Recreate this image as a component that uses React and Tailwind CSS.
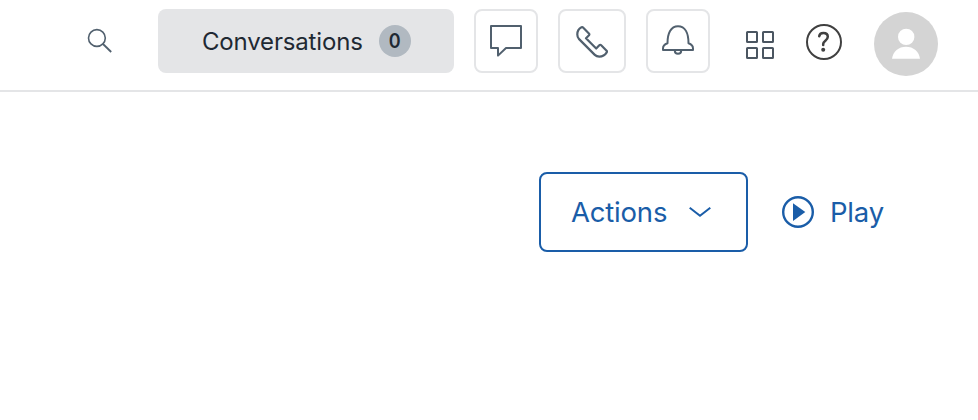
const iconProps = { fill: "none", stroke: "currentColor", strokeWidth: 2, strokeLinejoin: "round", strokeLinecap: "round", "aria-hidden": true };

function SearchIcon() {
  return (
    <svg width="26" height="26" viewBox="0 0 26 26" {...iconProps} strokeWidth="1.6" strokeLinecap="butt">
      <circle cx="9.9" cy="10" r="8.4" />
      <path d="M16 16l8.2 8" strokeWidth="1.8" />
    </svg>
  );
}

function ChatIcon() {
  return (
    <svg width="32" height="32" viewBox="0 0 32 32" {...iconProps}>
      <path d="M1 1h30v22H16l-8 7.6V23H1z" />
    </svg>
  );
}

function PhoneIcon() {
  return (
    <svg width="32" height="32" viewBox="0 0 32 32" {...iconProps} strokeWidth="2.2">
      <path d="M1.300 8.500C1.300 5.200 3 2.500 5.500 1.300c.7-.3 1.300-.1 1.800.4l5.600 5.700c.6.600.6 1.200.1 1.900L10 12.300l10.200 10.200 3.100-3.300c.6-.6 1.300-.6 1.900 0l5.400 5.500c.5.500.5 1.100.1 1.700-1.700 2.800-4.300 4.300-7.400 4.300-1.800 0-3.300-.6-4.500-1.800L3.100 13.100C1.900 11.900 1.300 10.300 1.300 8.500z" />
    </svg>
  );
}

function BellIcon() {
  return (
    <svg width="32" height="32" viewBox="0 0 32 32" {...iconProps}>
      <path d="M5.500 18.300C5.500 8.500 8.800 1.200 16 1.200s10.500 7.300 10.500 17.100c2.800 1 4.500 2.800 4.500 5.100v1.700H1v-1.700c0-2.300 1.700-4.100 4.500-5.100z" />
      <path d="M12.800 25.500c0 1.900 1.400 3.300 3.200 3.300s3.200-1.400 3.200-3.300" strokeLinecap="butt" />
    </svg>
  );
}

function HelpIcon() {
  return (
    <svg width="36" height="36" viewBox="0 0 36 36" {...iconProps}>
      <circle cx="18" cy="18" r="17" />
      <path d="M13.200 12.200c.3-2.100 2-3.200 4.200-3.200 2.600 0 4.400 1.500 4.400 3.800 0 3.900-4.600 3.900-4.600 7.300v.8" strokeWidth="2.500" />
      <circle cx="17.200" cy="25.700" r="2" fill="currentColor" stroke="none" />
    </svg>
  );
}

function Avatar() {
  return (
    <svg className="size-16 rounded-full bg-[#d4d4d4]" viewBox="0 0 64 64" fill="white" aria-hidden="true">
      <circle cx="32.200" cy="24.900" r="8.200" />
      <path d="M18 46.700C19 39.500 24.500 34.700 32 34.700s13 4.800 14 12z" />
    </svg>
  );
}

export default function App() {
  return (
    <div className="h-[420px] w-[978px] overflow-hidden bg-white font-['Inter',sans-serif] text-[#1f2933]">
      <header className="flex h-[92px] items-start border-b-2 border-[#e4e5e7] text-[#51606e]">
        <button className="mt-7 ml-[87px]" aria-label="Search"><SearchIcon /></button>
        <button className="mt-[9px] ml-[45px] flex h-16 w-[296px] items-center rounded-lg bg-[#e4e5e7] pl-11 text-[#1f2933]">
          <span className="w-[177px] pt-0.5 text-left text-2xl tracking-[-0.17px] whitespace-nowrap">Conversations</span>
          <span className="flex size-8 items-center justify-center rounded-full bg-[#b1b9c1] text-[20px] font-semibold"><span className="scale-x-90">0</span></span>
        </button>
        <button className="mt-[9px] ml-5 flex h-16 w-16 items-start justify-center rounded-lg border-2 border-[#e4e5e7] pt-3.5" aria-label="Chat"><ChatIcon /></button>
        <button className="mt-[9px] ml-5 flex h-16 w-[68px] items-start justify-center rounded-lg border-2 border-[#e4e5e7] pt-[15px]" aria-label="Calls"><PhoneIcon /></button>
        <button className="mt-[9px] ml-5 flex h-16 w-16 items-start justify-center rounded-lg border-2 border-[#e4e5e7] pt-3.5" aria-label="Notifications"><BellIcon /></button>
        <button className="mt-[31px] ml-9 grid grid-cols-2 gap-1 text-[#4b5661]" aria-label="Apps">
          <span className="size-3 rounded-[1.5px] border-2 border-current" />
          <span className="size-3 rounded-[1.5px] border-2 border-current" />
          <span className="size-3 rounded-[1.5px] border-2 border-current" />
          <span className="size-3 rounded-[1.5px] border-2 border-current" />
        </button>
        <button className="mt-6 ml-8 text-[#404040]" aria-label="Help"><HelpIcon /></button>
        <button className="mt-3 ml-8" aria-label="Account"><Avatar /></button>
      </header>
      <main className="flex justify-end pt-20 pr-[95px] text-[27.5px] tracking-[-0.2px] text-[#1a5da8]">
        <button className="flex h-20 w-[209px] items-center rounded-lg border-2 border-current pl-[30px]">
          <span className="w-[118px] pt-px text-left">Actions</span>
          <svg width="22" height="12" viewBox="0 0 22 12" {...iconProps} strokeLinecap="butt" strokeLinejoin="miter">
            <path d="M.7 1.800L11 9.800l10.300-8" />
          </svg>
        </button>
        <button className="ml-[34px] flex h-20 items-center gap-4">
          <svg width="32" height="32" viewBox="0 0 32 32" {...iconProps}>
            <circle cx="16" cy="16" r="14.800" strokeWidth="2.400" />
            <path d="M11 7.300L23.300 16 11 24.900z" fill="currentColor" stroke="none" />
          </svg>
          <span className="w-[53px] pt-px text-left">Play</span>
        </button>
      </main>
    </div>
  );
}
